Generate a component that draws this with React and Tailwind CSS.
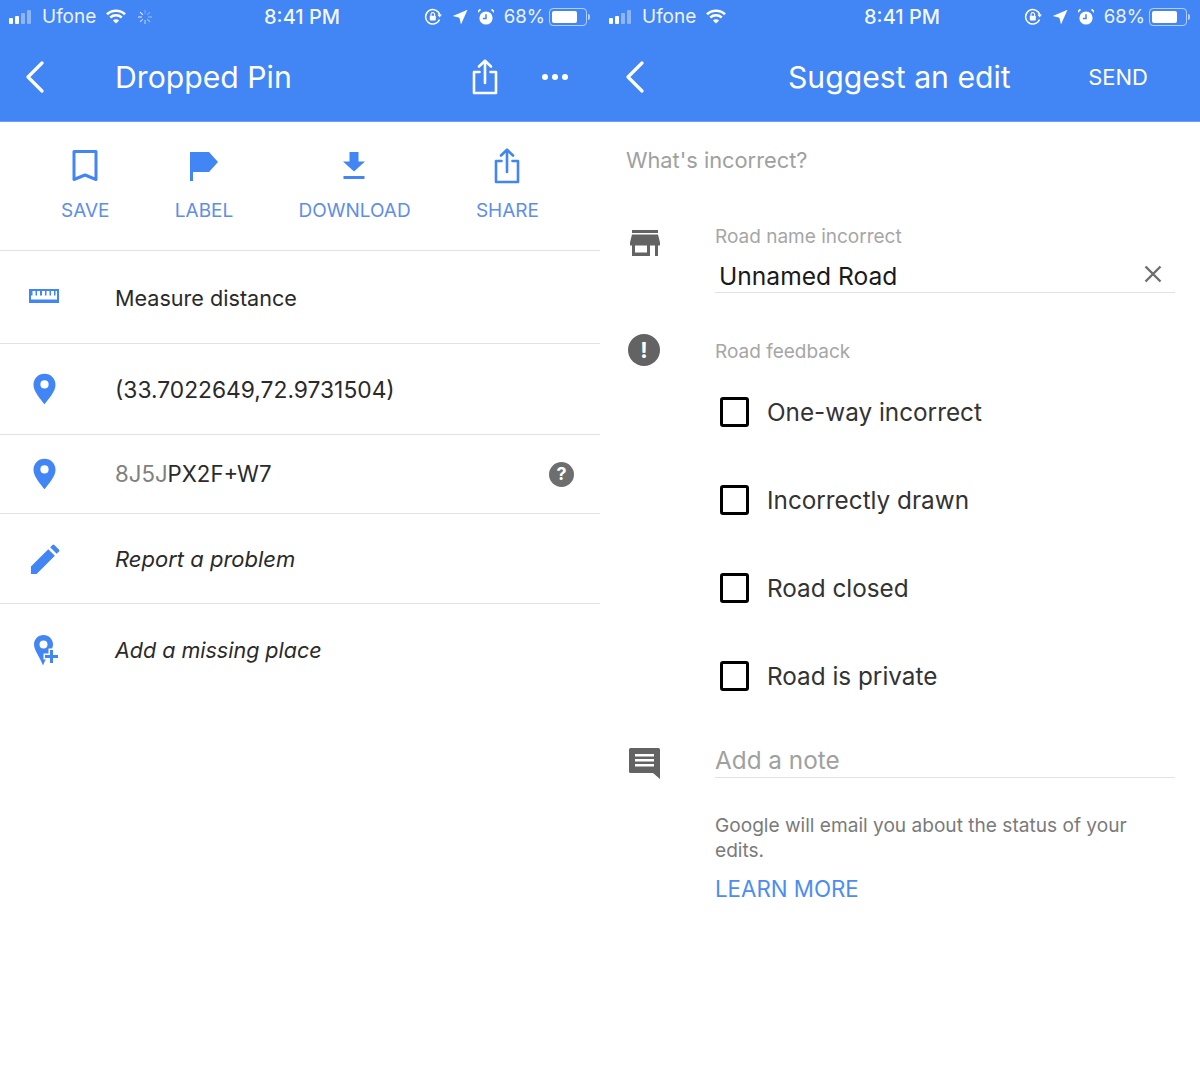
import React from "react";

const BLUE = "#4285f4";

function Signal() {
  return (
    <svg width="22" height="14" viewBox="0 0 22 14" className="shrink-0">
      <rect x="0" y="8" width="4" height="6" rx="1" fill="#fff" />
      <rect x="6" y="6" width="4" height="8" rx="1" fill="#fff" />
      <rect x="12" y="3" width="4" height="11" rx="1" fill="#fff" fillOpacity="0.4" />
      <rect x="18" y="0" width="4" height="14" rx="1" fill="#fff" fillOpacity="0.4" />
    </svg>
  );
}

function Wifi() {
  return (
    <svg width="20" height="15" viewBox="0 0 20 15" className="shrink-0" fill="none" stroke="#fff" strokeWidth="2.6">
      <path d="M1 5.2C6 .6 14 .6 19 5.2" />
      <path d="M4.3 8.4c3.2-2.8 8.2-2.8 11.4 0" />
      <path d="M10 14.5 6.9 11.4c1.8-1.4 4.4-1.4 6.2 0z" fill="#fff" stroke="none" />
    </svg>
  );
}

function Spinner() {
  const spokes = [0, 45, 90, 135, 180, 225, 270, 315];
  return (
    <svg width="16" height="16" viewBox="0 0 16 16" className="shrink-0">
      {spokes.map((a, i) => (
        <line key={a} x1="8" y1="1" x2="8" y2="5" stroke="#fff" strokeOpacity={0.25 + i * 0.08} strokeWidth="1.2" transform={`rotate(${a} 8 8)`} />
      ))}
    </svg>
  );
}

function StatusRight() {
  return (
    <div className="flex items-center justify-end">
      <svg width="18" height="18" viewBox="0 0 18 18" fill="none" stroke="#fff" strokeWidth="1.5" className="shrink-0">
        <path d="M15.5 11.5A7.2 7.2 0 1 1 15.8 7" />
        <path d="M13.4 6.6h4.4L15.6 9.6z" fill="#fff" stroke="none" />
        <rect x="5.8" y="7.8" width="6" height="4.6" rx=".6" fill="#fff" stroke="none" />
        <path d="M7 8V6.4a1.8 1.8 0 0 1 3.6 0V8" strokeWidth="1.1" />
      </svg>
      <svg width="16" height="16" viewBox="0 0 16 16" className="ml-[10px] shrink-0">
        <path d="M15.5.8 9 15.5 7.4 8.7.8 7z" fill="#fff" />
      </svg>
      <svg width="18" height="18" viewBox="0 0 18 18" className="ml-[9px] shrink-0">
        <circle cx="9" cy="10" r="6.6" fill="#fff" />
        <path d="M9 6.2V10.4H5.9" fill="none" stroke={BLUE} strokeWidth="1.5" />
        <path d="M1 5 4.2 1.8 2.6 1 1 2.4zM17 5l-3.2-3.2L15.4 1 17 2.4z" fill="#fff" />
      </svg>
      <span className="ml-[9px] text-[18.6px] leading-none text-white/90">68%</span>
      <div className="ml-[4px] flex shrink-0 items-center">
        <div className="flex h-[18px] w-[38px] items-center rounded-[4px] border border-white/60 p-[2px]">
          <div className="h-full w-[25px] rounded-[2px] bg-white" />
        </div>
        <div className="ml-[1px] h-[6px] w-[2px] rounded-r-sm bg-white/60" />
      </div>
    </div>
  );
}

function StatusBar({ loading }) {
  return (
    <div className="grid h-[32px] grid-cols-[255px_auto_1fr] items-center pb-[1px] pl-[9px] pr-[10px]">
      <div className="flex items-center">
        <Signal />
        <span className="ml-[11px] text-[19px] leading-none text-white/90">Ufone</span>
        <span className="ml-[10px]"><Wifi /></span>
        {loading && <span className="ml-[11px]"><Spinner /></span>}
      </div>
      <span className="text-[20px] font-medium leading-none text-white/95">8:41 PM</span>
      <StatusRight />
    </div>
  );
}

function BackIcon() {
  return (
    <svg width="20" height="32" viewBox="0 0 20 32" fill="none" stroke="#fff" strokeWidth="3.2" strokeLinecap="round" strokeLinejoin="round" className="shrink-0">
      <path d="M17 2 3 16l14 14" />
    </svg>
  );
}

function ShareIcon({ color = "#fff" }) {
  return (
    <svg width="26" height="36" viewBox="0 0 26 36" fill="none" stroke={color} strokeWidth="2.6" strokeLinecap="round" strokeLinejoin="round" className="shrink-0">
      <path d="M7.5 13H2v21h22V13h-5.5" />
      <path d="M13 24V2" />
      <path d="M7 7.5 13 1.800l6 5.700" />
    </svg>
  );
}

function ActionButton({ label, icon }) {
  return (
    <div className="flex flex-col items-center">
      <div className="flex h-[40px] items-center justify-center">{icon}</div>
      <span className="mt-[13px] text-[19px] leading-[24px] text-[#5f8ee8]">{label}</span>
    </div>
  );
}

function PinIcon() {
  return (
    <svg width="23" height="32" viewBox="0 0 24 33" className="shrink-0">
      <path fillRule="evenodd" fill={BLUE} d="M12 .5C5.5.5.5 5.600.5 12c0 7.5 8 15.5 11.5 20.5C15.5 27.5 23.5 19.500 23.500 12 23.500 5.600 18.500.5 12 .5zm0 15.500a4.300 4.300 0 1 1 0-8.600 4.300 4.300 0 0 1 0 8.600z" />
    </svg>
  );
}

function InfoRow({ icon, className, children, trailing, last }) {
  return (
    <div className={`flex items-center pl-[26px] pr-[26px] ${last ? "" : "border-b border-[#e2e2e2]"} ${className}`}>
      <div className="flex w-[90px] shrink-0 items-center">{icon}</div>
      <div className="flex-1 leading-none text-[#2a2a2a]">{children}</div>
      {trailing}
    </div>
  );
}

function DroppedPin() {
  return (
    <div className="w-[600px] shrink-0">
      <header className="h-[122px] border-b border-[#6fa0f5] bg-[#4285f4] pt-[1px]">
        <StatusBar loading />
        <div className="flex h-[88px] items-center pl-[25px] pr-[32px]">
          <BackIcon />
          <h1 className="ml-[70px] flex-1 text-[30.2px] font-normal leading-none text-white">Dropped Pin</h1>
          <ShareIcon />
          <div className="ml-[44px] flex gap-[4px]">
            <span className="h-[6px] w-[6px] rounded-full bg-white" />
            <span className="h-[6px] w-[6px] rounded-full bg-white" />
            <span className="h-[6px] w-[6px] rounded-full bg-white" />
          </div>
        </div>
      </header>

      <div className="flex h-[129px] items-start justify-between border-b border-[#e2e2e2] pl-[61px] pr-[61px] pt-[24px]">
        <ActionButton
          label="SAVE"
          icon={
            <svg width="26" height="34" viewBox="0 0 26 34" fill="none" stroke={BLUE} strokeWidth="3">
              <path d="M2 2.5h22V30.5L13 26 2 30.5z" strokeLinejoin="round" />
            </svg>
          }
        />
        <ActionButton
          label="LABEL"
          icon={
            <svg width="30" height="32" viewBox="0 0 30 32" fill={BLUE}>
              <path d="M1 2h19l9 10-9 10H4v9H1z" />
            </svg>
          }
        />
        <ActionButton
          label="DOWNLOAD"
          icon={
            <svg width="24" height="32" viewBox="0 0 24 32" fill={BLUE} className="-translate-x-[1px]">
              <path d="M7.5 2h9v9.5H23L12 21.5 1 11.5h6.5zM1.5 26h21v3h-21z" />
            </svg>
          }
        />
        <ActionButton label="SHARE" icon={<ShareIcon color={BLUE} />} />
      </div>

      <InfoRow
        className="h-[93px] pt-[4px]"
        icon={
          <svg width="30" height="14" viewBox="0 0 30 14" className="ml-[3px] -translate-y-[3px]">
            <path fill={BLUE} fillRule="evenodd" d="M0 0h30v14H0zM2 2v8.500h26V2h-1.500v4.500h-1.500V2h-3v4.500h-1.500V2h-3v4.500h-1.500V2h-3v4.500H11V2H8v4.500H6.500V2h-3v4.500H2z" />
          </svg>
        }
      >
        <span className="ml-[-1px] text-[21.6px]">Measure distance</span>
      </InfoRow>
      <InfoRow className="h-[91px] pt-[2px]" icon={<span className="ml-[7px] flex -translate-y-[1px]"><PinIcon /></span>}>
        <span className="ml-[-1px] text-[22.8px]">(33.7022649,72.9731504)</span>
      </InfoRow>
      <InfoRow
        className="h-[79px]"
        icon={<span className="ml-[7px] flex"><PinIcon /></span>}
        trailing={
          <span className="flex h-[25px] w-[25px] items-center justify-center rounded-full bg-[#6e6e6e] text-[18px] font-bold leading-none text-white">?</span>
        }
      >
        <span className="ml-[-1px] text-[22.2px]"><span className="text-[#808080]">8J5J</span>PX2F+W7</span>
      </InfoRow>
      <InfoRow
        className="h-[90px]"
        icon={
          <svg width="30" height="30" viewBox="0 0 32 32" fill={BLUE} className="ml-[4px]">
            <path d="M1 32v-8L19.5 5.5l7 7L7 32zM21.5 3.5 24 1a1.500 1.500 0 0 1 2 0l5 5a1.500 1.500 0 0 1 0 2l-2.500 2.500z" />
          </svg>
        }
      >
        <em className="ml-[-1px] text-[22px]">Report a problem</em>
      </InfoRow>
      <InfoRow
        last
        className="h-[92px] pt-[2px]"
        icon={
          <svg width="25" height="31" viewBox="0 0 25 31" className="ml-[8px] -translate-y-[1px]">
            <path fill={BLUE} fillRule="evenodd" d="M9.500 0C4.200 0 0 4.200 0 9.500 0 15.500 6 22 9 30.500 12 22 19 15.500 19 9.500 19 4.200 14.800 0 9.500 0zm0 13.500a4 4 0 1 1 0-8 4 4 0 0 1 0 8z" />
            <path fill={BLUE} stroke="#fff" strokeWidth="3" paintOrder="stroke" d="M16 15h3v5h5v3h-5v5h-3v-5h-5v-3h5z" />
          </svg>
        }
      >
        <em className="ml-[-1px] text-[21.5px]">Add a missing place</em>
      </InfoRow>
    </div>
  );
}

function CheckRow({ label }) {
  return (
    <div className="flex h-[88px] items-center pl-[5px]">
      <span className="h-[30px] w-[29px] shrink-0 rounded-[3px] border-[3px] border-black" />
      <span className="ml-[18px] text-[24.3px] leading-none text-[#333]">{label}</span>
    </div>
  );
}

function SuggestEdit() {
  return (
    <div className="w-[600px] shrink-0">
      <header className="h-[122px] border-b border-[#6fa0f5] bg-[#4285f4] pt-[1px]">
        <StatusBar />
        <div className="flex h-[88px] items-center pl-[25px] pr-[52px]">
          <BackIcon />
          <h1 className="flex-1 pl-[143px] text-[30.2px] font-normal leading-none text-white">Suggest an edit</h1>
          <span className="text-[22px] leading-none text-white">SEND</span>
        </div>
      </header>

      <div className="pl-[26px] pr-[25px]">
        <p className="pt-[25px] text-[21.8px] leading-[26px] text-[#a0a0a0]">What's incorrect?</p>

        <div className="mt-[52px] flex">
          <div className="w-[89px] shrink-0 pl-[4px] pt-[5px]">
            <svg width="30" height="26" viewBox="0 0 30 26" fill="#636363">
              <path d="M2 0h26v3H2zM2 4.500h26l2 8v3h-2V26h-3V15.500h-5V26H2V15.500H0v-3zM5 15.500V22.500h12v-7z" fillRule="evenodd" />
            </svg>
          </div>
          <div className="flex-1">
            <p className="text-[19px] leading-[24px] text-[#a6a6a6]">Road name incorrect</p>
            <div className="mt-[8px] flex h-[36px] items-center justify-between border-b border-[#e2e2e2] pl-[4px] pr-[13px] pt-[3px]">
              <span className="text-[24.6px] leading-none text-[#1a1a1a]">Unnamed Road</span>
              <svg width="18" height="18" viewBox="0 0 18 18" stroke="#6e6e6e" strokeWidth="2.4" className="mb-[4px]">
                <path d="M1.5 1.5l15 15M16.500 1.500l-15 15" />
              </svg>
            </div>
          </div>
        </div>

        <div className="mt-[41px] flex">
          <div className="w-[89px] shrink-0 pl-[2px]">
            <span className="flex h-[32px] w-[32px] items-center justify-center rounded-full bg-[#636363] text-[22px] font-bold leading-none text-white">!</span>
          </div>
          <div className="flex-1">
            <p className="pt-[6px] text-[19px] leading-[24px] text-[#a6a6a6]">Road feedback</p>
            <div className="mt-[4px]">
              <CheckRow label="One-way incorrect" />
              <CheckRow label="Incorrectly drawn" />
              <CheckRow label="Road closed" />
              <CheckRow label="Road is private" />
            </div>
          </div>
        </div>

        <div className="mt-[10px] flex">
          <div className="w-[89px] shrink-0 pl-[2px] pt-[17px]">
            <svg width="33" height="33" viewBox="0 0 33 33" fill="#636363">
              <path fillRule="evenodd" d="M2.500 1h28A1.500 1.500 0 0 1 32 2.500V32l-7-6H2.500A1.500 1.500 0 0 1 1 24.500v-22A1.500 1.500 0 0 1 2.500 1zM7 7v2.500h19V7zM7 12v2.500h19V12zM7 17v2.500h19V17z" />
            </svg>
          </div>
          <div className="flex-1">
            <div className="flex h-[48px] items-center border-b border-[#e2e2e2] pt-[13px] text-[24.3px] leading-none text-[#a0a0a0]">Add a note</div>
            <p className="mt-[35px] w-[440px] text-[19.1px] leading-[25px] text-[#7a7a7a]">Google will email you about the status of your edits.</p>
            <p className="mt-[13px] text-[22.3px] leading-[26px] text-[#4c8df0]">LEARN MORE</p>
          </div>
        </div>
      </div>
    </div>
  );
}

export default function App() {
  return (
    <div className="flex h-[1067px] w-[1200px] overflow-hidden bg-white font-['Inter','Liberation_Sans',sans-serif]">
      <DroppedPin />
      <SuggestEdit />
    </div>
  );
}
